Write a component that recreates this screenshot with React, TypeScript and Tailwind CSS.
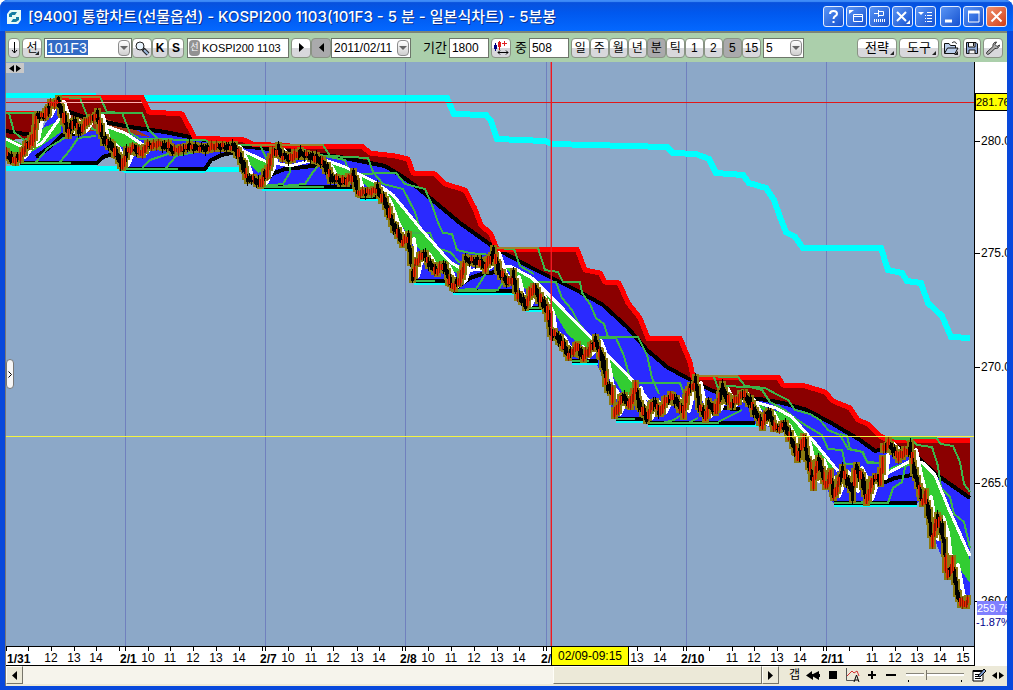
import React from "react";

type Point = [number, number];

const PLOT = { x: 6, y: 62, w: 968, h: 584 };

const toPoints = (p: Point[]) => p.map(([x, y]) => `${x},${y}`).join(" ");
const leftOf = (x: number) => `${((x - PLOT.x) / PLOT.w) * 100}%`;
const topOf = (y: number) => `${((y - PLOT.y) / PLOT.h) * 100}%`;

const price: Point[] = [
  [6, 155], [13, 160], [20, 156], [27, 145], [32, 140], [37, 115], [45, 116], [50, 105], [58, 102], [63, 117], [68, 132],
  [73, 121], [80, 131], [88, 120], [97, 116], [103, 140], [112, 147], [122, 165], [128, 150], [134, 148], [140, 153],
  [147, 146], [160, 144], [168, 147], [174, 151], [187, 147], [207, 148], [220, 146], [234, 147], [240, 158], [247, 178],
  [260, 183], [267, 170], [272, 154], [278, 150], [282, 156], [290, 158], [300, 153], [312, 157], [320, 161], [325, 166],
  [332, 179], [342, 182], [353, 176], [358, 193], [367, 192], [377, 190], [385, 203], [393, 225], [402, 242], [408, 239],
  [412, 276], [415, 263], [423, 254], [430, 265], [437, 271], [443, 266], [452, 286], [460, 280], [465, 260], [477, 261],
  [485, 267], [493, 253], [500, 274], [508, 283], [513, 277], [517, 294], [525, 305], [533, 287], [540, 299], [547, 312],
  [550, 332], [558, 337], [568, 355], [577, 347], [583, 357], [590, 349], [595, 341], [602, 360], [607, 387], [612, 393],
  [614, 414], [622, 397], [630, 405], [635, 388], [640, 407], [646, 418], [653, 402], [660, 412], [666, 400], [672, 397],
  [683, 411], [688, 390], [695, 383], [700, 409], [705, 416], [708, 405], [715, 409], [722, 389], [730, 405], [742, 394],
  [750, 403], [755, 413], [762, 424], [768, 413], [775, 428], [783, 425], [790, 438], [797, 456], [803, 440], [808, 462],
  [813, 481], [818, 460], [825, 485], [830, 477], [833, 496], [842, 472], [852, 491], [856, 468], [862, 480], [866, 499],
  [873, 478], [880, 478], [883, 450], [888, 444], [898, 456], [910, 450], [915, 475], [922, 501], [925, 497], [932, 539],
  [937, 517], [942, 533], [947, 576], [952, 565], [958, 597], [962, 605], [969, 601],
];

const topA: Point[] = [
  [56, 97], [142, 97], [149, 112], [182, 114], [195, 138], [244, 140], [252, 144], [290, 146], [363, 147], [370, 153],
  [395, 156], [408, 159], [413, 173], [435, 174], [445, 184], [465, 190], [475, 209], [481, 225], [491, 234], [497, 249],
  [577, 249], [585, 270], [600, 273], [605, 282], [619, 283], [628, 303], [640, 318], [648, 338], [680, 338], [690, 362],
  [693, 377], [778, 377], [783, 385], [805, 386], [825, 392], [833, 401], [850, 408], [858, 420], [868, 424], [880, 436],
  [888, 440], [970, 440],
];

const middle: Point[] = [
  [58, 104], [66, 111], [90, 119], [130, 127], [165, 132], [195, 138], [230, 145], [290, 151], [340, 157], [385, 166],
  [400, 175], [413, 184], [430, 198], [460, 223], [495, 248], [530, 267], [560, 282], [580, 292], [603, 305], [627, 327],
  [647, 350], [667, 367], [687, 378], [713, 391], [735, 397], [760, 399], [783, 403], [807, 410], [833, 424], [860, 440],
  [875, 451], [895, 446], [913, 453], [937, 475], [970, 498],
];

const floor: Point[] = [
  [20, 163], [97, 163], [112, 155], [122, 169], [205, 169], [215, 158], [237, 150], [247, 178], [260, 187], [355, 187],
  [358, 194], [367, 197], [380, 195], [393, 223], [408, 240], [412, 281], [445, 281], [452, 291], [515, 291], [525, 308],
  [545, 308], [550, 330], [568, 355], [575, 361], [595, 361], [607, 385], [614, 419], [645, 420], [650, 424], [755, 424],
  [762, 424], [790, 435], [797, 452], [808, 458], [813, 475], [825, 484], [833, 503], [917, 503], [922, 498], [932, 533],
  [947, 570], [958, 596], [970, 605],
];

const cyanTop: Point[] = [
  [143, 98], [447, 98], [454, 114], [486, 115], [491, 121], [497, 139], [545, 141], [552, 144], [667, 147], [673, 153],
  [696, 154], [709, 159], [716, 173], [743, 175], [749, 183], [766, 188], [774, 200], [780, 217], [786, 232], [795, 237],
  [803, 248], [881, 248], [888, 270], [902, 273], [907, 281], [921, 283], [928, 303], [942, 316], [951, 337], [970, 338],
];

const cyanFlats: Point[][] = [
  [[6, 95], [96, 95]],
  [[6, 168], [122, 168]],
  [[122, 169], [245, 169]],
];

const flatFloors: Point[][] = [
  [[20, 163], [97, 163], [103, 157], [113, 154]],
  [[124, 169], [205, 169], [211, 160], [222, 155], [235, 152]],
  [[262, 187], [355, 187]],
  [[360, 197], [380, 197]],
  [[414, 281], [445, 281]],
  [[453, 291], [517, 291]],
  [[526, 308], [545, 308]],
  [[572, 361], [598, 361]],
  [[616, 419], [644, 419]],
  [[648, 423], [755, 423]],
  [[834, 503], [917, 503]],
];

const blackAverages: Point[][] = [
  [[6, 131], [32, 135]],
  [[36, 157], [50, 147], [62, 135], [75, 134]],
  [[264, 183], [272, 174], [285, 169], [305, 167], [318, 165]],
  [[456, 288], [470, 278], [482, 274], [496, 272]],
  [[862, 490], [880, 484], [895, 478], [912, 475]],
  [[700, 414], [720, 408], [740, 409]],
];

const lime: Point[][] = [
  [[6, 137], [25, 145], [45, 127], [62, 120], [61, 132], [40, 147], [15, 161], [6, 152]],
  [[103, 124], [122, 131], [143, 146], [128, 150], [112, 142]],
  [[240, 151], [265, 162], [268, 168], [258, 173], [248, 163]],
  [[324, 160], [345, 167], [375, 182], [395, 197], [420, 227], [450, 261], [467, 268], [468, 276], [440, 268], [425, 255], [410, 238], [395, 215], [380, 195], [355, 178], [330, 172]],
  [[505, 267], [530, 275], [545, 290], [590, 337], [600, 350], [588, 350], [568, 335], [550, 305], [520, 285]],
  [[605, 355], [633, 381], [641, 402], [625, 397], [614, 378]],
  [[755, 403], [790, 416], [815, 443], [837, 468], [825, 468], [805, 447], [785, 425], [765, 412]],
  [[878, 478], [892, 467], [912, 460], [925, 463], [940, 485], [970, 560], [970, 583], [950, 555], [935, 518], [920, 490], [913, 465], [893, 470]],
];

const greens: Point[][] = [
  [[6, 113], [35, 113], [37, 134], [24, 140], [14, 132], [9, 113]],
  [[58, 97], [80, 98], [88, 118], [92, 129], [108, 133]],
  [[58, 97], [100, 97], [107, 112], [122, 113], [130, 133], [140, 139], [205, 140], [215, 146]],
  [[98, 113], [142, 113], [149, 130], [160, 141]],
  [[36, 162], [48, 148], [58, 142], [66, 137]],
  [[60, 162], [70, 150], [78, 138], [96, 136]],
  [[142, 168], [150, 160], [165, 155], [178, 151]],
  [[166, 168], [176, 156], [195, 152], [225, 149]],
  [[238, 145], [260, 145], [268, 162]],
  [[262, 186], [283, 184], [290, 172], [291, 160]],
  [[283, 186], [305, 184], [313, 172], [318, 166]],
  [[262, 145], [323, 145], [330, 156], [368, 158], [373, 172], [383, 184], [403, 189], [415, 212], [419, 226]],
  [[300, 147], [310, 153], [345, 160], [349, 174]],
  [[352, 174], [396, 173], [405, 184], [425, 189], [432, 205], [439, 225], [443, 233], [452, 234], [457, 250], [470, 253], [491, 255]],
  [[404, 233], [430, 233], [436, 248], [450, 252], [460, 263]],
  [[454, 290], [476, 289], [483, 278], [488, 270]],
  [[478, 290], [498, 290], [503, 282]],
  [[494, 248], [514, 249], [520, 266], [534, 274]],
  [[497, 248], [538, 248], [545, 270], [558, 272], [563, 282], [580, 282], [582, 293], [590, 304], [596, 318], [604, 324], [608, 337]],
  [[533, 282], [556, 282], [562, 298], [572, 310], [578, 322], [585, 331]],
  [[595, 338], [616, 338], [624, 356], [629, 375]],
  [[595, 337], [638, 337], [647, 355], [652, 378], [659, 394]],
  [[635, 383], [680, 383], [684, 394]],
  [[662, 423], [674, 420], [684, 413]],
  [[688, 423], [698, 418]],
  [[697, 376], [738, 377], [745, 386], [765, 388], [778, 395], [788, 400], [795, 410], [810, 414], [820, 420], [828, 430], [840, 435], [848, 449], [862, 452], [868, 463], [880, 463]],
  [[714, 377], [718, 388]],
  [[722, 386], [750, 387], [762, 390], [770, 402], [785, 410], [795, 418], [805, 425], [822, 435], [828, 449], [842, 450], [845, 464], [855, 464]],
  [[718, 422], [730, 416], [742, 410]],
  [[840, 434], [847, 436], [850, 449], [863, 452], [867, 462], [880, 463]],
  [[888, 438], [912, 440], [917, 445], [932, 447], [938, 466], [941, 488], [950, 497], [954, 514], [964, 522], [970, 548]],
  [[890, 438], [936, 438], [941, 444], [953, 446], [960, 462], [964, 484], [970, 492]],
  [[888, 503], [893, 488], [902, 482], [906, 463]],
  [[854, 503], [868, 502]],
];

const whites: Point[][] = [
  [[6, 139], [28, 150], [42, 143], [60, 118]],
  [[103, 125], [125, 133], [145, 146]],
  [[239, 149], [265, 161], [290, 166], [318, 159]],
  [[325, 160], [345, 167], [375, 182], [393, 195], [420, 228], [450, 262], [465, 271], [490, 268]],
  [[498, 265], [512, 267], [532, 278], [560, 306], [598, 345], [633, 381], [650, 402]],
  [[755, 402], [776, 408], [792, 417], [815, 443], [838, 471]],
  [[868, 487], [890, 472], [912, 460], [923, 463], [935, 475], [948, 507], [970, 556]],
];

const average: Point[] = price.map(([x, y]) => [Math.min(x + 6, 970), y]);

type Candle = { x: number; y: number; wick: number; body: number; up: boolean };

function buildCandles(): Candle[] {
  const out: Candle[] = [];
  let k = 0;
  for (let i = 0; i < price.length - 1; i++) {
    const [x0, y0] = price[i];
    const [x1, y1] = price[i + 1];
    const n = Math.max(1, Math.round((x1 - x0) / 2));
    const slope = Math.abs(y1 - y0) / n;
    for (let j = 0; j < n; j++) {
      const t = j / n;
      const noise = ((k * 37) % 11) - 5;
      const up = y1 < y0 ? k % 6 !== 0 : k % 4 === 0;
      const size = 2 + Math.min(slope, 12) / 2;
      out.push({
        x: Math.round(x0 + (x1 - x0) * t),
        y: Math.round(y0 + (y1 - y0) * t + noise * 0.4),
        wick: Math.round(size + 1 + Math.abs(noise) * 0.6),
        body: Math.round(size),
        up,
      });
      k++;
    }
  }
  return out;
}

const candles = buildCandles();
const bars = (list: Candle[], reach: (c: Candle) => number) =>
  list.map((c) => `M${c.x} ${c.y - reach(c)}V${c.y + reach(c)}`).join("");

function Plot() {
  const down = candles.filter((c) => !c.up);
  const up = candles.filter((c) => c.up);
  return (
    <svg
      className="block h-full w-full"
      viewBox={`${PLOT.x} ${PLOT.y} ${PLOT.w} ${PLOT.h}`}
      preserveAspectRatio="none"
      shapeRendering="crispEdges"
      fill="none"
      role="img"
      aria-label="KOSPI200 1103"
    >
      {[125, 265, 405, 546, 686, 826].map((x) => (
        <path key={x} d={`M${x + 0.5} 62V646`} stroke="#7080be" />
      ))}
      <polyline points={toPoints(cyanTop)} stroke="#00ffff" strokeWidth="6" />
      {cyanFlats.map((p, i) => (
        <polyline key={i} points={toPoints(p)} stroke="#00ffff" strokeWidth="5" />
      ))}
      <path d="M728 424H758" stroke="#00ffff" strokeWidth="5" />
      <polygon points="6,113 36,113 40,138 6,140" fill="#8b0000" />
      <polygon points={toPoints([...topA, ...[...middle].reverse()])} fill="#8b0000" />
      <polygon points={toPoints([...middle, ...[...floor].reverse()])} fill="#2a2aff" />
      <polygon points="62,110 100,120 98,130 66,136" fill="#a03818" />
      <polygon points="98,116 130,127 150,137 115,131" fill="#a03818" />
      <polyline points={toPoints(middle)} stroke="#000" strokeWidth="4" />
      <polyline points={toPoints(topA)} stroke="#ff0000" strokeWidth="5" />
      <path d="M6 112H37" stroke="#ff0000" strokeWidth="3" />
      {flatFloors.map((p, i) => (
        <g key={i}>
          <polyline points={toPoints(p.slice(0, 2).map(([x, y]) => [x, y + 2] as Point))} stroke="#00ffff" strokeWidth="3" />
          <polyline points={toPoints(p)} stroke="#000" strokeWidth="4" />
          <path d={`M${p[0][0]} ${p[0][1]}H${Math.round((p[0][0] + p[1][0] * 2) / 3)}`} stroke="#3cb54a" strokeWidth="2" />
        </g>
      ))}
      {blackAverages.map((p, i) => (
        <polyline key={i} points={toPoints(p)} stroke="#000" strokeWidth="4" />
      ))}
      {lime.map((p, i) => (
        <polygon key={i} points={toPoints(p)} fill="#32cd32" />
      ))}
      {greens.map((p, i) => (
        <polyline key={i} points={toPoints(p)} stroke="#3cb54a" strokeWidth="2" />
      ))}
      <path d="M58 97H100M497 248H538M697 376H738M250 145H323" stroke="#a08228" strokeWidth="2" />
      {whites.map((p, i) => (
        <polyline key={i} points={toPoints(p)} stroke="#fff" strokeWidth="3" />
      ))}
      <polyline points={toPoints(average)} stroke="#fff" strokeWidth="4" strokeLinejoin="round" />
      <path d={bars(candles, (c) => c.body + 2)} stroke="#8a7a10" strokeWidth="7" />
      <path d={bars(down, (c) => c.body)} stroke="#000" strokeWidth="3" />
      <path d={bars(up, (c) => c.body)} stroke="#f02800" strokeWidth="3" />
      <path d={bars(up, (c) => c.wick - 1)} stroke="#8b1a00" strokeWidth="1" />
      <path d={bars(down, (c) => c.wick)} stroke="#000" strokeWidth="1" />
      <path d="M6 102.5H975" stroke="#e01818" />
      <path d="M60 102.5H142" stroke="#ffb0b0" />
      <path d="M6 436.5H975" stroke="#f4f440" />
      <rect x="550" y="62" width="1" height="584" fill="#f01820" opacity="0.4" />
      <rect x="551" y="62" width="1" height="584" fill="#f01820" />
    </svg>
  );
}

const hours: [number, string][] = [
  [51, "12"], [74, "13"], [96, "14"], [148, "10"], [170, "11"], [193, "12"], [216, "13"], [239, "14"], [288, "10"],
  [311, "11"], [333, "12"], [357, "13"], [379, "14"], [428, "10"], [451, "11"], [474, "12"], [497, "13"], [519, "14"],
  [637, "13"], [660, "14"], [732, "11"], [754, "12"], [777, "13"], [800, "14"], [872, "11"], [895, "12"], [917, "13"],
  [940, "14"], [963, "15"],
];
const days: [number, string][] = [
  [7, "1/31"], [120, "2/1"], [260, "2/7"], [400, "2/8"], [541, "2/"], [681, "2/10"], [821, "2/11"],
];
const extraTicks = [6, 28, 119, 125, 262, 265, 402, 405, 543, 546, 683, 686, 709, 823, 826, 849];

function TimeAxis() {
  return (
    <div className="flex h-5 shrink-0 bg-white text-[12px] leading-4 text-black">
      <div className="relative flex-1 overflow-hidden border-y border-r border-black">
        {[...extraTicks, ...hours.map(([x]) => x)].map((x) => (
          <span key={x} className="absolute top-0 h-1 w-px bg-black" style={{ left: leftOf(x) }} />
        ))}
        {hours.map(([x, t]) => (
          <span key={x} className="absolute top-[3px] -translate-x-1/2 leading-4" style={{ left: leftOf(x) }}>
            {t}
          </span>
        ))}
        {days.map(([x, t]) => (
          <span key={x} className="absolute top-1 font-bold leading-4" style={{ left: leftOf(x) }}>
            {t}
          </span>
        ))}
        <span
          className="absolute inset-y-0 w-[78px] border-x border-black bg-[#ffff00] text-center leading-[18px]"
          style={{ left: leftOf(551) }}
        >
          02/09-09:15
        </span>
      </div>
      <div className="w-8" />
    </div>
  );
}

const prices: [number, string][] = [
  [141, "280.0"], [253, "275.0"], [367, "270.0"], [483, "265.0"], [601, "260.0"],
];

function PriceAxis() {
  return (
    <div className="relative w-8 shrink-0 overflow-hidden bg-white text-[11px] leading-4 text-black">
      {prices.map(([y, t]) => (
        <span key={t} className="absolute left-0 flex -translate-y-1/2 items-center gap-px text-[12px]" style={{ top: topOf(y) }}>
          <i className="h-px w-[5px] bg-black" />
          {t}
        </span>
      ))}
      <span className="absolute left-0 -translate-y-1/2 border border-black bg-[#ffff00]" style={{ top: topOf(102) }}>
        281.76
      </span>
      <span className="absolute left-0.5 -translate-y-1/2 bg-[#8080ff] leading-[14px] text-white" style={{ top: topOf(608) }}>
        259.75
      </span>
      <span className="absolute left-px -translate-y-1/2 text-[#00008b]" style={{ top: topOf(622) }}>
        -1.87%
      </span>
    </div>
  );
}

function Tool({ children, label, className = "w-5", pressed = false }: { children: React.ReactNode; label?: string; className?: string; pressed?: boolean }) {
  return (
    <button
      type="button"
      aria-label={label}
      className={`relative flex h-5 shrink-0 items-center justify-center rounded-sm border border-[#8a9384] leading-4 ${
        pressed ? "bg-[#aaaaac]" : "bg-linear-to-b from-white from-50% to-[#d8d8dc] to-50%"
      } ${className}`}
    >
      {children}
    </button>
  );
}

function Corner() {
  return (
    <svg className="absolute right-0.5 bottom-0.5 size-1" viewBox="0 0 4 4" aria-hidden="true">
      <path d="M4 0V4H0Z" fill="#222" />
    </svg>
  );
}

function Arrow() {
  return (
    <span className="pointer-events-none absolute inset-y-px right-px flex w-3 items-center justify-center rounded-sm border border-[#8c8c8c] bg-linear-to-b from-white to-[#cfcfcf]">
      <svg className="h-1 w-2" viewBox="0 0 8 4" aria-hidden="true">
        <path d="M0 0H8L4 4Z" fill="#666" />
      </svg>
    </span>
  );
}

function Pick({ label, value, className }: { label: string; value: string; className: string }) {
  return (
    <span className={`relative h-5 shrink-0 border border-[#6d766a] bg-white ${className}`}>
      <select aria-label={label} className="block h-full w-full appearance-none bg-transparent pl-0.5 text-[12px] leading-4 outline-none">
        <option>{value}</option>
      </select>
      <Arrow />
    </span>
  );
}

function Triangle({ left = false }: { left?: boolean }) {
  return (
    <svg className="h-[9px] w-[5px]" viewBox="0 0 5 9" aria-hidden="true">
      <path d={left ? "M5 0V9L0 4.5Z" : "M0 0V9L5 4.5Z"} fill="#000" />
    </svg>
  );
}

function Toolbar() {
  return (
    <div className="flex h-[31px] shrink-0 items-center border-t-2 border-[#7b8577] bg-[#abcfab] pr-1 pl-0.5 text-[12px] text-black">
      <Tool className="w-3" label="아래로">
        <svg className="h-3 w-[7px]" viewBox="0 0 7 12" fill="none" stroke="#000"><path d="M3.5 0V11M1 8L3.5 11L6 8" /></svg>
      </Tool>
      <Tool className="ml-0.5 w-5">선<Corner /></Tool>
      <span className="relative ml-0.5 flex h-5 w-[88px] shrink-0 items-center border border-[#6d766a] bg-white pl-0.5">
        <input aria-label="종목코드" defaultValue="101F3" className="h-[15px] w-[41px] bg-[#316ac5] text-[14px] leading-4 text-white outline-none" />
        <Arrow />
      </span>
      <Tool label="검색">
        <svg className="size-4" viewBox="0 0 16 16" fill="none">
          <circle cx="6" cy="6" r="4" fill="#e8f4ff" stroke="#222" />
          <path d="M9 9L14 14" stroke="#222" strokeWidth="4" />
          <path d="M10 10L14 14" stroke="#9bb8dc" strokeWidth="2" />
        </svg>
      </Tool>
      <Tool className="w-4"><b>K</b></Tool>
      <Tool className="w-4"><b>S</b></Tool>
      <span className="ml-[3px] flex h-5 w-[102px] shrink-0 items-center gap-0.5 border border-[#6d766a] bg-white pl-px">
        <i className="flex h-4 w-[11px] shrink-0 items-center justify-center rounded-sm bg-[#929292] text-[9px] text-white not-italic">선</i>
        <input aria-label="종목명" defaultValue="KOSPI200 1103" className="w-full min-w-0 bg-transparent text-[11px] leading-4 outline-none" />
      </span>
      <Tool className="ml-0.5 w-5" label="다음"><Triangle /></Tool>
      <Tool pressed label="이전"><Triangle left /></Tool>
      <Pick label="날짜" value="2011/02/11" className="w-20" />
      <label className="ml-3 flex shrink-0 items-center gap-0.5 text-[13px]">
        기간
        <input defaultValue="1800" className="h-5 w-10 border border-[#6d766a] bg-white pl-0.5 text-[12px] outline-none" />
      </label>
      <Tool className="ml-0.5 w-5" label="봉 간격">
        <svg className="size-4" viewBox="0 0 16 16" fill="none">
          <path d="M2.500 3V11" stroke="#000080" />
          <path d="M1 5H4V9H1Z" fill="#000080" />
          <path d="M6.500 1V10" stroke="#d01010" />
          <path d="M5 2H8V7H5Z" fill="#e02020" />
          <path d="M11.500 1V6M9 3.500H14" stroke="#e02020" />
          <path d="M5 12.500H15M7 10.500L5 12.500L7 14.500M13 10.500L15 12.500L13 14.500" stroke="#000" />
        </svg>
      </Tool>
      <label className="ml-1 flex shrink-0 items-center gap-0.5 text-[13px]">
        중
        <input defaultValue="508" className="h-5 w-10 border border-[#6d766a] bg-white pl-0.5 text-[12px] outline-none" />
      </label>
      <div className="ml-0.5 flex">
        {["일", "주", "월", "년", "분", "틱", "1", "2", "5", "15"].map((t) => (
          <Tool key={t} className="w-[19px]" pressed={t === "분" || t === "5"}>{t}</Tool>
        ))}
      </div>
      <Pick label="간격" value="5" className="ml-0.5 w-[41px]" />
      <div className="ml-auto flex gap-0.5">
        <Tool className="w-10 text-[13px]">전략<Corner /></Tool>
        <Tool className="w-10 text-[13px]">도구<Corner /></Tool>
        <Tool label="열기">
          <svg className="size-4" viewBox="0 0 16 16" fill="#b9cdea" stroke="#111">
            <path d="M1.500 13V3.500H6L7.500 5.500H12.500V8M1.500 13.500L4.500 8H15L12 13.500Z" />
            <path d="M9 3C11 1 13 2 13.500 4" fill="none" />
          </svg>
          <Corner />
        </Tool>
        <Tool label="저장" className="w-[18px]">
          <svg className="size-[14px]" viewBox="0 0 14 14" fill="#91a9d6" stroke="#111">
            <path d="M1.500 1.500H11L12.500 3V12.500H1.500Z" />
            <path d="M3.500 1.500H10V6H3.500ZM4 12.500V9H10V12.500" fill="#f6f6f6" />
            <path d="M8.500 2V5" />
          </svg>
        </Tool>
        <Tool label="설정">
          <svg className="size-4" viewBox="0 0 16 16" fill="#aaa" stroke="#333">
            <path d="M2 12L8 6.500C7.500 4 9 2 11.500 2L10 4.500L12 6.500L14.500 5C14.500 7.500 12 9 10 8.500L4 14Q2 15 1.500 13.500Z" />
          </svg>
        </Tool>
      </div>
    </div>
  );
}

function Caption({ label, children, close = false }: { label: string; children: React.ReactNode; close?: boolean }) {
  return (
    <button
      type="button"
      aria-label={label}
      className={`flex size-[21px] items-center justify-center rounded-[3px] border border-[#e4edff] bg-linear-to-br ${
        close ? "from-[#f0906c] to-[#d03c10]" : "from-[#5a94f4] to-[#1450d0]"
      }`}
    >
      <svg className="size-[17px]" viewBox="0 0 17 17" fill="none" stroke="#fff">{children}</svg>
    </button>
  );
}

function TitleBar() {
  return (
    <header className="flex h-[31px] shrink-0 items-center bg-linear-to-b from-[#0a50d8] via-[#0058ee] via-40% to-[#0468ff] pt-0.5 pr-1.5 pl-[7px] shadow-[inset_0_2px_1px_#3f8cf8]">
      <svg className="size-[14px]" viewBox="0 0 14 14" aria-hidden="true">
        <path d="M3 0H14V10L11 14H0V4Z" fill="#e7fbf6" />
        <path d="M2 7V4L5 2H10L8 5H5V7ZM12 7V10L9 12H4L6 9H9V7Z" fill="#157ca2" />
      </svg>
      <h1 className="ml-[7px] flex-1 truncate font-['Inter','Noto_Sans_CJK_KR',sans-serif] text-[15px] leading-5 font-medium text-white [text-shadow:1px_1px_#0a2f8c]">
        [9400] 통합차트(선물옵션) - KOSPI200 1103(101F3 - 5 분 - 일본식차트) - 5분봉
      </h1>
      <div className="flex gap-0.5">
        <Caption label="도움말"><path d="M5 6C5 2 12 2 12 6C12 8 8.500 8 8.500 11M8.500 13V15" strokeWidth="2" /></Caption>
        <Caption label="화면 복사"><path d="M5.500 6.500H14.500V13.500H5.500ZM5.500 8.500H14" /><path d="M1 2H6L1 6Z" fill="#fff" stroke="none" /></Caption>
        <Caption label="고정"><path d="M3 5.500H7M7.500 2V9M8 3.500H12.500V7.500H8" /><path d="M3 12.500H14" strokeDasharray="1 1" strokeWidth="3" /></Caption>
        <Caption label="연결"><path d="M3 4L12 13M12 4L3 13" strokeWidth="2" /><path d="M16 12V16H12Z" fill="#fff" stroke="none" /></Caption>
        <Caption label="메뉴"><path d="M1 4H7L4 7Z" fill="#fff" stroke="none" /><path d="M10 4.500H15M10 7.500H15M10 10.500H15M10 13.500H15" /><path d="M8 7.500H9M8 10.500H9M8 13.500H9" /></Caption>
      </div>
      <div className="ml-1 flex gap-0.5">
        <Caption label="최소화"><path d="M3 13H10" strokeWidth="3" /></Caption>
        <Caption label="최대화"><path d="M3.500 3.500H14V14H3.500Z" /><path d="M3 4H14.500" strokeWidth="3" /></Caption>
        <Caption label="닫기" close><path d="M3.500 3.500L13.500 13.500M13.500 3.500L3.500 13.500" strokeWidth="2" /></Caption>
      </div>
    </header>
  );
}

function Footer() {
  const raised = "flex w-[17px] shrink-0 items-center justify-center border border-t-[#fffef8] border-l-[#fffef8] border-r-[#77756a] border-b-[#77756a] bg-[#ece9d8]";
  return (
    <footer className="flex h-5 shrink-0 items-stretch bg-[#ece9d8] pb-0.5">
      <div className="flex flex-1 bg-[#f6f4ec]">
        <button type="button" aria-label="왼쪽으로" className={raised}><Triangle left /></button>
        <div className="flex flex-1">
          <div className="flex-[532]" />
          <div className="flex-[208] border border-t-[#fffef8] border-r-[#77756a] border-b-[#77756a] border-l-[#fffef8] bg-[#ece9d8]" />
        </div>
        <button type="button" aria-label="오른쪽으로" className={raised}><Triangle /></button>
      </div>
      <div className="flex w-[228px] shrink-0 items-center text-[12px] text-black">
        <button type="button" className="ml-2.5 leading-4">갭</button>
        <button type="button" aria-label="뒤로" className="ml-1.5">
          <svg className="h-[9px] w-[14px]" viewBox="0 0 14 9"><path d="M6 0V3H7L13 0V3H14V6H13V9L7 5.500V9L0 4.500L6 0Z" /></svg>
        </button>
        <button type="button" aria-label="정지" className="ml-[9px] size-2 bg-black" />
        <button type="button" aria-label="자동 차트" className="ml-2">
          <svg className="size-[15px]" viewBox="0 0 15 15" fill="none">
            <path d="M1.500 0V12.500H9" stroke="#555" />
            <path d="M2 8L7 3L9 5L12 3L14 8" stroke="#d03030" />
            <path d="M9 14L11.500 7L14 14M10 12H13" stroke="#000" />
          </svg>
        </button>
        <button type="button" aria-label="확대" className="ml-2">
          <svg className="size-2" viewBox="0 0 8 8"><path d="M3 0H5V3H8V5H5V8H3V5H0V3H3Z" /></svg>
        </button>
        <button type="button" aria-label="축소" className="ml-2.5 h-0.5 w-2.5 bg-black" />
        <span className="ml-2.5 flex w-[58px] flex-col">
          <input
            type="range"
            aria-label="확대 비율"
            defaultValue={32}
            className="h-3 w-full appearance-none bg-transparent [&::-webkit-slider-runnable-track]:h-[3px] [&::-webkit-slider-runnable-track]:border-t [&::-webkit-slider-runnable-track]:border-[#88857a] [&::-webkit-slider-runnable-track]:bg-white [&::-webkit-slider-thumb]:-mt-1 [&::-webkit-slider-thumb]:h-2.5 [&::-webkit-slider-thumb]:w-[3px] [&::-webkit-slider-thumb]:appearance-none [&::-webkit-slider-thumb]:border-r [&::-webkit-slider-thumb]:border-[#777468] [&::-webkit-slider-thumb]:bg-[#ece9d8]"
          />
          <span className="flex justify-between px-0.5"><i className="h-0.5 w-px bg-black" /><i className="h-0.5 w-px bg-black" /></span>
        </span>
        <button type="button" aria-label="메모" className="ml-2">
          <svg className="size-[14px]" viewBox="0 0 14 14" fill="none">
            <path d="M1 2.500H11V13H1Z" fill="#fff" stroke="#000" />
            <path d="M1 3H11" stroke="#000" strokeWidth="2" />
            <path d="M3 6.500H8M3 8.500H9M3 10.500H9" stroke="#000" />
            <path d="M6 8L12 1L14 3L8 9Z" fill="#7d9bd0" stroke="#000" />
          </svg>
        </button>
        <button type="button" aria-label="좌우" className="ml-1.5"><Both /></button>
      </div>
    </footer>
  );
}

function Both() {
  return (
    <svg className="h-[7px] w-3" viewBox="0 0 12 7" aria-hidden="true">
      <path d="M5 0V7L0 3.500ZM7 0V7L12 3.500Z" fill="#000" />
    </svg>
  );
}

export default function App() {
  return (
    <div className="flex h-screen flex-col overflow-hidden rounded-t-lg bg-[#0848dc] pb-1 font-['Liberation_Sans','Noto_Sans_CJK_KR',sans-serif]">
      <TitleBar />
      <main className="mr-1.5 ml-[5px] flex min-h-0 flex-1 flex-col border-l border-[#777] bg-white">
        <Toolbar />
        <section className="flex min-h-0 flex-1">
          <div className="relative min-w-0 flex-1 border-r border-black bg-[#8ca8c8]">
            <Plot />
            <button type="button" aria-label="영역 전환" className="absolute top-px left-0 flex h-2.5 w-[18px] items-center justify-center bg-[#c8c8c8]">
              <Both />
            </button>
            <button type="button" aria-label="패널 열기" className="absolute top-[297px] left-0 flex h-[30px] w-2 items-center justify-center rounded-sm border border-[#777] bg-[#f6f6f6]">
              <svg className="h-[7px] w-1" viewBox="0 0 4 7" fill="none" stroke="#000"><path d="M0.500 0.500L3.500 3.500L0.500 6.500" /></svg>
            </button>
          </div>
          <PriceAxis />
        </section>
        <TimeAxis />
        <Footer />
      </main>
    </div>
  );
}
